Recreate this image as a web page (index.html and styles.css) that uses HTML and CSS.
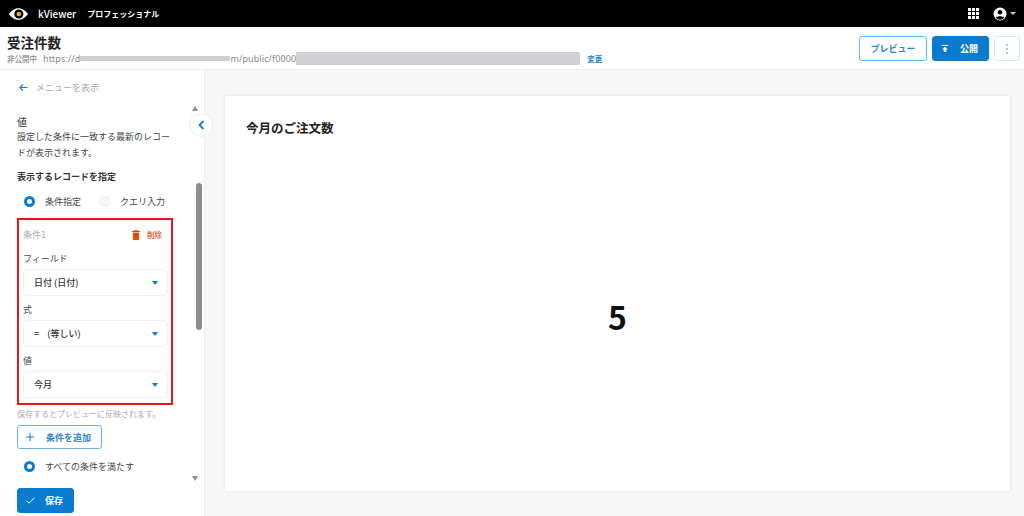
FILE: index.html
```html
<!DOCTYPE html>
<html lang="ja">
<head>
  <meta charset="UTF-8" />
  <title>kViewer</title>
  <link rel="stylesheet" href="styles.css">
</head>
<body>
  <!-- top bar -->
  <div class="topbar">
    <svg class="logo" width="20" height="14" viewBox="0 0 24 16">
      <path d="M1 8C5 2.500 9 1 12.500 1S20 2.500 24 8c-4 5.500-8 7-11.500 7S5 13.500 1 8z" fill="#fff"/>
      <circle cx="13" cy="8" r="5.500" fill="#000"/>
      <circle cx="13" cy="8" r="2.800" fill="#e2a81e"/>
    </svg>
    <span class="brand">kViewer</span>
    <span class="plan">プロフェッショナル</span>
    <span class="spacer"></span>
    <svg class="apps" width="11" height="11" viewBox="0 0 11 11" fill="#fff">
      <rect width="3" height="3"/><rect x="4" width="3" height="3"/><rect x="8" width="3" height="3"/>
      <rect y="4" width="3" height="3"/><rect x="4" y="4" width="3" height="3"/><rect x="8" y="4" width="3" height="3"/>
      <rect y="8" width="3" height="3"/><rect x="4" y="8" width="3" height="3"/><rect x="8" y="8" width="3" height="3"/>
    </svg>
    <svg class="user" width="14" height="14" viewBox="0 0 14 14">
      <circle cx="7" cy="7" r="6.500" fill="#fff"/>
      <circle cx="7" cy="5.200" r="2.300" fill="#000"/>
      <path d="M2.800 10.800C4 8.800 10 8.800 11.200 10.800 10 12.200 8.500 12.600 7 12.600S4 12.200 2.800 10.800z" fill="#000"/>
    </svg>
    <span class="caret-white"></span>
  </div>

  <!-- app header -->
  <div class="header">
    <div class="header-info">
      <div class="app-title">受注件数</div>
      <div class="url-row">
        <span class="status">非公開中</span>
        <span class="url">https://d<span class="mask-thin"></span>m/public/f0000<span class="mask-wide"></span></span>
        <a class="change">変更</a>
      </div>
    </div>
    <div class="header-btns">
      <button class="btn btn-outline btn-preview">プレビュー</button>
      <button class="btn btn-primary btn-publish">
        <svg width="8" height="9" viewBox="0 0 10 10" fill="#fff"><rect x="1" y="0.500" width="8" height="1.300"/><path d="M5 2.800L8.500 6.300H6.500V9.500H3.500V6.300H1.500z"/></svg>
        公開
      </button>
      <button class="btn btn-more"><span class="dots"></span></button>
    </div>
  </div>

  <div class="main">
    <!-- left settings column -->
    <div class="sidebar">
      <div class="back">
        <svg width="9" height="9" viewBox="0 0 10 10" fill="none" stroke="#0b7fd4" stroke-width="1.300"><path d="M9.500 5H1M4.500 1.500L1 5l3.500 3.500"/></svg>
        <span>メニューを表示</span>
      </div>
      <div class="section-name">値</div>
      <p class="desc">設定した条件に一致する最新のレコードが表示されます。</p>
      <div class="sub-title">表示するレコードを指定</div>
      <div class="radio-row">
        <span class="radio on"></span><span class="radio-label">条件指定</span>
        <span class="radio off"></span><span class="radio-label">クエリ入力</span>
      </div>

      <div class="condition">
        <div class="condition-head">
          <span class="condition-name">条件1</span>
          <span class="delete">
            <svg width="8" height="10" viewBox="0 0 8 10" fill="#d4500f"><rect y="1" width="8" height="1.200"/><rect x="2.500" width="3" height="1.200"/><path d="M0.800 2.800H7.200V9a1 1 0 0 1-1 1H1.800a1 1 0 0 1-1-1z"/></svg>
            削除
          </span>
        </div>
        <label class="field-label">フィールド</label>
        <div class="select"><span>日付 (日付)</span><i class="caret"></i></div>
        <label class="field-label">式</label>
        <div class="select"><span>=&nbsp;&nbsp;&nbsp; (等しい)</span><i class="caret"></i></div>
        <label class="field-label">値</label>
        <div class="select"><span>今月</span><i class="caret"></i></div>
      </div>

      <div class="hint">保存するとプレビューに反映されます。</div>
      <button class="btn btn-outline btn-add">
        <svg width="8" height="8" viewBox="0 0 9 9" stroke="#0b7fd4" stroke-width="1.200"><path d="M4.500 0V9M0 4.500H9"/></svg>
        条件を追加
      </button>
      <div class="radio-row radio-all">
        <span class="radio on"></span><span class="radio-label">すべての条件を満たす</span>
      </div>
      <button class="btn btn-primary btn-save">
        <svg width="9" height="7" viewBox="0 0 10 8" fill="none" stroke="#fff" stroke-width="1.100"><path d="M0.500 4.500L3.500 7 9.500 0.800"/></svg>
        保存
      </button>

      <div class="scroll-up"></div>
      <div class="scroll-thumb"></div>
      <div class="scroll-down"></div>
      <div class="collapse">
        <svg width="7" height="10" viewBox="0 0 7 10" fill="none" stroke="#0b7fd4" stroke-width="1.800"><path d="M5.500 1L1.500 5l4 4"/></svg>
      </div>
    </div>

    <!-- preview -->
    <div class="content">
      <div class="card">
        <h2 class="card-title">今月のご注文数</h2>
        <div class="card-value">5</div>
      </div>
    </div>
  </div>
</body>
</html>
```

FILE: styles.css
```css
* {
  box-sizing: border-box;
}

html, body {
  height: 100%;
}

body {
  margin: 0;
  width: 1024px;
  height: 516px;
  overflow: hidden;
  display: flex;
  flex-direction: column;
  background: #fff;
  color: #2b2b2b;
  font-family: "Noto Sans CJK JP", "Noto Sans", sans-serif;
}

button {
  font-family: inherit;
}

.topbar {
  height: 27px;
  flex: none;
  background: #000;
  color: #fff;
  display: flex;
  align-items: center;
  padding: 0 8px 0 8px;
}

.brand {
  margin-left: 10px;
  font-size: 10px;
  font-weight: 500;
}

.plan {
  margin-left: 11px;
  font-size: 8px;
  font-weight: 700;
}

.spacer {
  flex: 1;
}

.user {
  margin-left: 14px;
}

.caret-white {
  margin-left: 3px;
  border-left: 3px solid transparent;
  border-right: 3px solid transparent;
  border-top: 3px solid #ccc;
}

.header {
  height: 43px;
  flex: none;
  display: flex;
  justify-content: space-between;
  background: #fff;
  border-bottom: 1px solid #eee;
  padding: 7px 4px 0 7px;
}

.app-title {
  font-size: 13.500px;
  line-height: 17px;
  font-weight: 700;
  color: #222;
}

.url-row {
  display: flex;
  align-items: center;
  height: 14px;
}

.status {
  font-size: 7.500px;
  color: #888;
  font-weight: 500;
}

.url {
  margin-left: 6px;
  display: flex;
  align-items: center;
  font-size: 9px;
  letter-spacing: 0.1px;
  color: #888;
  font-family: "Noto Sans", sans-serif;
}

.mask-thin {
  width: 150px;
  height: 5px;
  background: #cfcfd1;
}

.mask-wide {
  width: 284px;
  height: 13px;
  background: #d1d1d3;
  border-radius: 0 2px 2px 0;
}

.change {
  margin-left: 7px;
  font-size: 7.500px;
  font-weight: 700;
  color: #1d84d6;
}

.header-btns {
  display: flex;
  gap: 5px;
  align-items: flex-start;
  padding-top: 2px;
}

.btn {
  display: flex;
  align-items: center;
  height: 25px;
  border-radius: 3px;
  font-size: 9px;
  font-weight: 700;
  padding: 0;
}

.btn-outline {
  background: #fff;
  border: 1px solid #6bb3e8;
  color: #2a86d2;
}

.btn-primary {
  background: #0b7bd0;
  border: 1px solid #0b7bd0;
  color: #fff;
}

.btn-preview {
  width: 68px;
  justify-content: center;
}

.btn-publish {
  width: 57px;
  gap: 11px;
  padding-left: 8px;
}

.btn-more {
  width: 26px;
  justify-content: center;
  background: #fff;
  border: 1px solid #d5e8f6;
}

.dots {
  width: 2px;
  height: 2px;
  background: #a9cbe6;
  box-shadow: 0 -4px 0 #a9cbe6, 0 4px 0 #a9cbe6;
}

.main {
  flex: 1;
  display: flex;
  min-height: 0;
}

.sidebar {
  position: relative;
  width: 205px;
  flex: none;
  background: #fff;
  border-right: 1px solid #eee;
  padding: 10px 0 0 17px;
}

.back {
  display: flex;
  align-items: center;
  gap: 8px;
  height: 14px;
  margin-left: 2px;
  font-size: 9px;
  color: #aaa;
}

.section-name {
  margin-top: 21px;
  font-size: 10px;
  line-height: 14px;
  color: #333;
}

.desc {
  width: 156px;
  margin: 0;
  font-size: 9px;
  line-height: 16px;
  color: #444;
}

.sub-title {
  margin-top: 9px;
  font-size: 9px;
  line-height: 14px;
  font-weight: 700;
  color: #333;
}

.radio-row {
  display: flex;
  align-items: center;
  height: 14px;
  margin-top: 10px;
  padding-left: 7px;
  font-size: 9px;
  color: #444;
}

.radio {
  width: 11px;
  height: 11px;
  border-radius: 50%;
  flex: none;
}

.radio.on {
  background: #fff;
  border: 3.500px solid #0b7bd0;
}

.radio.off {
  margin-left: 18px;
  background: #f6f6f6;
  border: 1px solid #eee;
}

.radio-label {
  margin-left: 10px;
}

.condition {
  width: 156px;
  height: 187px;
  margin-top: 10px;
  border: 2px solid #e8141f;
  padding: 0 3px 0 4px;
}

.condition-head {
  display: flex;
  justify-content: space-between;
  align-items: center;
  height: 28px;
  padding-top: 1px;
  padding-right: 6px;
  font-size: 9px;
  color: #aaa;
}

.delete {
  display: flex;
  align-items: center;
  gap: 7px;
  font-size: 7.500px;
  font-weight: 500;
  color: #d4500f;
}

.field-label {
  display: block;
  height: 13px;
  margin-top: 7px;
  font-size: 9px;
  line-height: 13px;
  color: #444;
}

.condition-head + .field-label {
  margin-top: 4px;
}

.select {
  display: flex;
  justify-content: space-between;
  align-items: center;
  height: 27px;
  margin-top: 4px;
  padding: 0 9px 0 10px;
  border: 1px solid #f0f0f0;
  border-radius: 3px;
  font-size: 9px;
  font-weight: 500;
  color: #333;
}

.caret {
  border-left: 3.500px solid transparent;
  border-right: 3.500px solid transparent;
  border-top: 4px solid #0b7bd0;
}

.hint {
  margin-top: 3px;
  font-size: 8px;
  line-height: 12px;
  color: #aaa;
}

.btn-add {
  width: 85px;
  height: 24px;
  gap: 12px;
  margin-top: 5px;
  padding-left: 8px;
}

.radio-all {
  margin-top: 10px;
}

.btn-save {
  width: 57px;
  gap: 10px;
  margin-top: 15px;
  padding-left: 8px;
}

.scroll-up,
.scroll-down {
  position: absolute;
  left: 192px;
  border-left: 3.500px solid transparent;
  border-right: 3.500px solid transparent;
}

.scroll-up {
  top: 36px;
  border-bottom: 5px solid #8e8e8e;
}

.scroll-down {
  top: 406px;
  border-top: 5px solid #8e8e8e;
}

.scroll-thumb {
  position: absolute;
  left: 196px;
  top: 113px;
  width: 6px;
  height: 147px;
  border-radius: 3px;
  background: #8e8e8e;
}

.collapse {
  position: absolute;
  left: 189px;
  top: 43px;
  width: 24px;
  height: 24px;
  border-radius: 50%;
  background: #fff;
  border: 1px solid #eee;
  display: flex;
  align-items: center;
  justify-content: center;
}

.content {
  flex: 1;
  background: #f7f7f7;
  padding: 26px 14px 25px 20px;
}

.card {
  position: relative;
  height: 100%;
  background: #fff;
  box-shadow: 0 0 3px rgba(0, 0, 0, 0.1);
  display: flex;
  flex-direction: column;
  padding: 23px 21px;
}

.card-title {
  margin: 0;
  font-size: 12.500px;
  line-height: 18px;
  font-weight: 700;
  color: #222;
}

.card-value {
  flex: 1;
  display: flex;
  align-items: center;
  justify-content: center;
  padding-top: 26px;
  font-size: 32px;
  font-weight: 700;
  color: #111;
}
```
